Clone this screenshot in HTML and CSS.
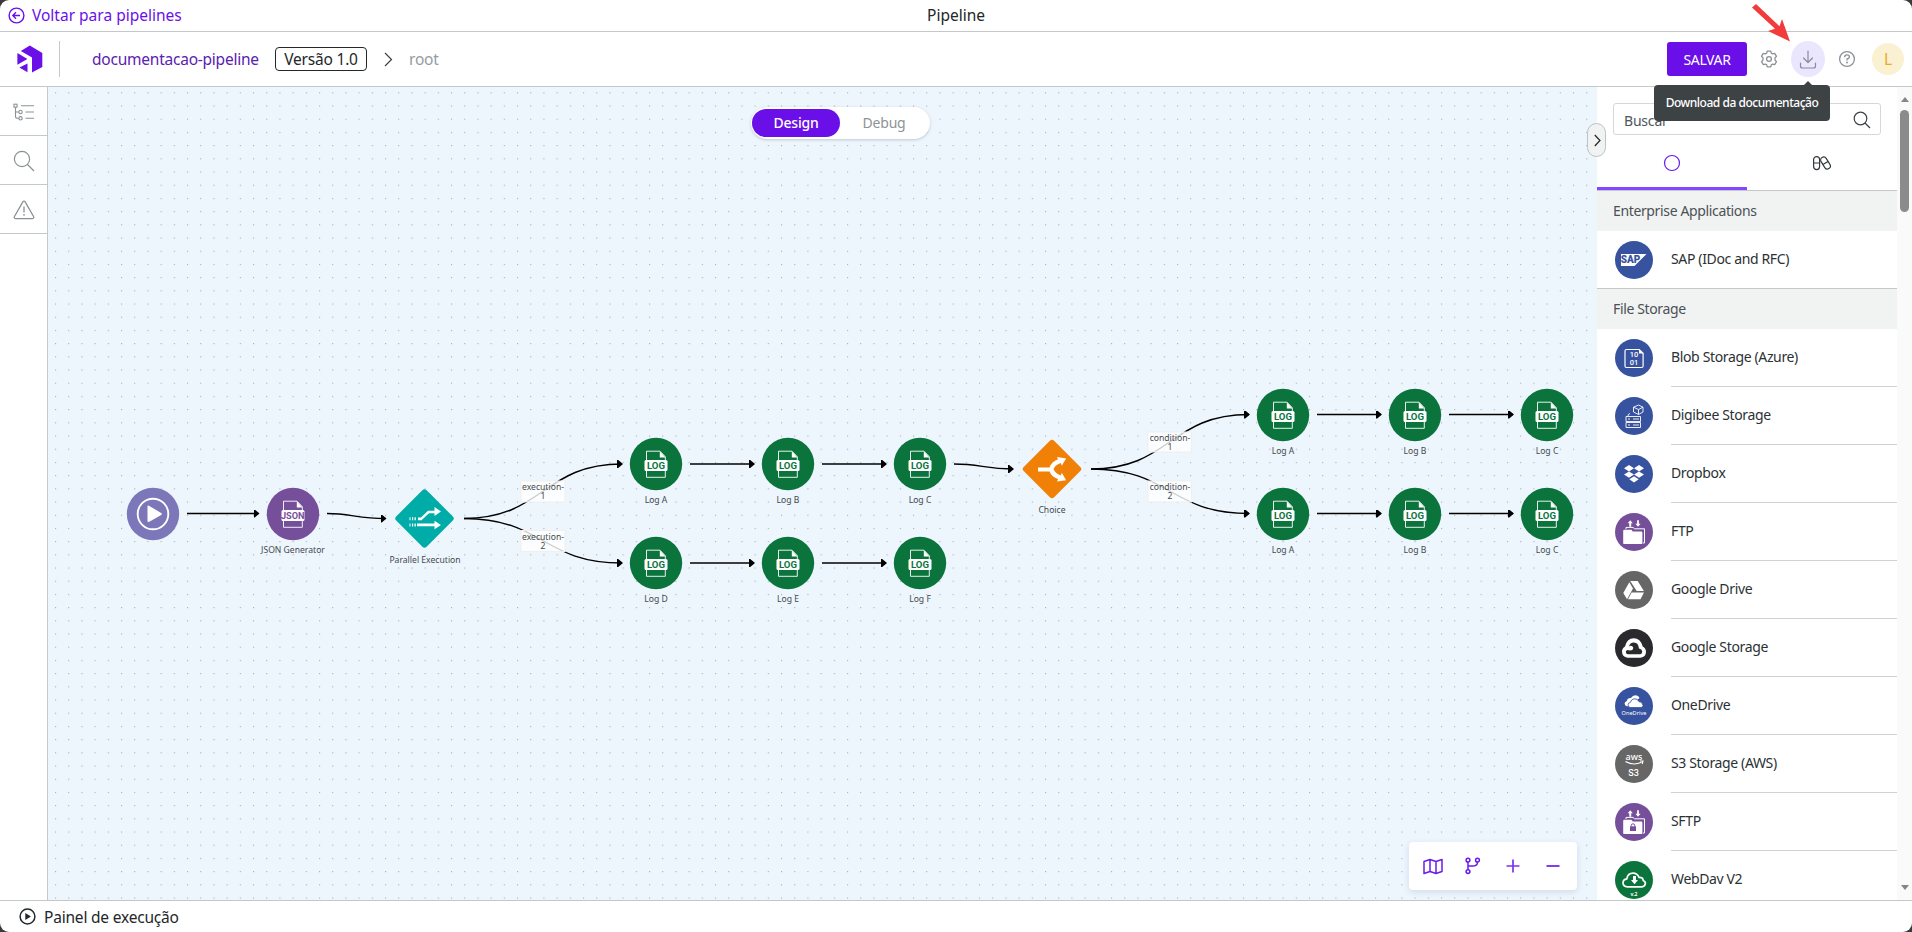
FILE: index.html
```html
<!DOCTYPE html>
<html lang="pt-BR">
<head>
<meta charset="utf-8">
<title>Pipeline</title>
<link rel="stylesheet" href="styles.css">
</head>
<body>
<svg width="0" height="0" class="defs">
  <defs>
    <symbol id="file" viewBox="-26 -26 52 52">
      <path d="M-9.5-4V-12.8H4L9.3-7.3V-4M-9.5 6V13.3H9.3V6" fill="none" stroke="#fff" stroke-width=".9"/>
      <path d="M3.8-12.8V-6.6H9.6z" fill="#fff"/>
      <rect x="-11.5" y="-4" width="23" height="11" rx="1.5" fill="#fff"/>
    </symbol>
    <symbol id="folder" viewBox="0 0 38 38">
      <path d="M15.3 7.2l2.5 3h-1.6v3.6h-1.9v-3.6h-1.6zM23 13.8l-2.6-3h1.700V7.200h1.800v3.600h1.700z" fill="#fff"/>
      <path d="M11 16v-1.600h7l1.500 1.400h10V30h-1.500" fill="none" stroke="#fff" stroke-width="1"/>
      <path d="M8.200 18q0-1.200 1.200-1.200h7l1.400 1.700h8.400q1.200 0 1.200 1.200v10.200q0 1.200-1.200 1.200H9.400q-1.200 0-1.200-1.200z" fill="#fff"/>
    </symbol>
  </defs>
</svg>
<div class="app">
  <header class="topbar">
    <a class="back"><svg width="17" height="17" viewBox="0 0 17 17" fill="none" stroke="#6a0fe8" stroke-width="1.4"><circle cx="8.5" cy="8.5" r="7.4"/><path d="M12 8.5H5M8 5.3L4.8 8.5 8 11.7"/></svg><span>Voltar para pipelines</span></a>
    <h1>Pipeline</h1>
  </header>
  <div class="subbar">
    <svg class="logo" width="26" height="29" viewBox="0 0 26 29"><path d="M12.800.6L25.300 8v14L15 27.600V12.400L3.800 5.900z" fill="#6a0fe8"/><path d="M.4 8.100V19.700L10.400 14z" fill="#6a0fe8"/><path d="M10.500 18.500V27.300L2.400 22.600z" fill="#6a0fe8"/></svg>
    <i class="divider"></i>
    <a class="project">documentacao-pipeline</a>
    <span class="version">Versão 1.0</span>
    <svg class="chev" width="9" height="15" viewBox="0 0 9 15" fill="none" stroke="#3a4042" stroke-width="1.2"><path d="M1 1l6.500 6.500L1 14"/></svg>
    <span class="crumb">root</span>
    <div class="actions">
      <button class="save">SALVAR</button>
      <svg class="gear" width="18" height="18" viewBox="0 0 18 18" fill="none" stroke="#8b9295" stroke-width="1.3" stroke-linejoin="round"><circle cx="9" cy="9" r="2.4"/><path d="M7.200 1.200h3.600l.5 2 1.300.7 2.100-.6 1.800 3-1.500 1.600v2.200l1.500 1.600-1.800 3-2.100-.6-1.300.7-.5 2H7.200l-.5-2-1.300-.7-2.100.6-1.800-3L3 10.100V7.900L1.500 6.300l1.800-3 2.100.6 1.300-.7z"/></svg>
      <span class="download"><svg width="18" height="19" viewBox="0 0 18 19" fill="none" stroke="#8b8a9d" stroke-width="1.2" stroke-linecap="round" stroke-linejoin="round"><path d="M9 1v11.500M4.500 8L9 12.500 13.500 8M1.500 13v3q0 2 2 2h11q2 0 2-2v-3"/></svg>
        <span class="tooltip">Download da documentação</span></span>
      <svg class="help" width="18" height="18" viewBox="0 0 18 18" fill="none" stroke="#8b9295" stroke-width="1.3"><circle cx="9" cy="9" r="7.4"/><path d="M6.600 7.200q0-2.400 2.400-2.400t2.400 2.100Q11.400 8.400 9 9v1.500"/><circle cx="9" cy="12.500" r=".4"/></svg>
      <span class="avatar">L</span>
    </div>
  </div>
  <main class="work">
    <nav class="rail">
      <div><svg width="22" height="18" viewBox="0 0 22 18" fill="none" stroke="#8b9295" stroke-width="1.1"><rect x="1" y="1.200" width="3" height="3"/><circle cx="7.500" cy="9" r="1.700"/><circle cx="7.500" cy="15.300" r="1.700"/><path d="M2.500 4.200v9q0 2.100 2.100 2.100h1.200M2.500 9h3.300M8 2.700h13M12.500 9H21M12.500 15.300H21"/></svg></div>
      <div><svg width="22" height="22" viewBox="0 0 22 22" fill="none" stroke="#8b9295" stroke-width="1.2"><circle cx="9" cy="9" r="7.600"/><path d="M14.500 14.500L21 21"/></svg></div>
      <div><svg width="22" height="20" viewBox="0 0 22 20" fill="none" stroke="#8b9295" stroke-width="1.3" stroke-linejoin="round"><path d="M9.700 2.100q1.300-1.900 2.600 0l8.400 14.600q.6 1.700-1.200 1.900H2.500q-1.800-.2-1.200-1.900z"/><path d="M11 6.500v6M11 14v1.800"/></svg></div>
    </nav>
    <section class="canvas">
      <svg class="flow" width="1549" height="813" viewBox="48 87 1549 813">
        <defs>
          <pattern id="dots" x="55" y="92.300" width="13.200" height="13.200" patternUnits="userSpaceOnUse"><rect width="1.100" height="1.100" fill="#a3adb5"/></pattern>
          <marker id="tip" viewBox="0 0 6 8" refX="5" refY="4" markerWidth="6" markerHeight="8" markerUnits="userSpaceOnUse" orient="0"><path d="M0 0H1.200L6 4 1.200 8H0z"/></marker>
        </defs>
        <rect x="48" y="87" width="1549" height="813" fill="url(#dots)"/>
        <g class="edges">
          <path d="M187 513.500H258.500"/>
          <path d="M327 513.500C350 513.500 358 518.500 385.500 518.500"/>
          <path d="M464 518.500C543 518.500 543 464 622 464"/>
          <path d="M464 518.500C543 518.500 543 563 622 563"/>
          <path d="M690 464H754"/><path d="M822 464H886"/>
          <path d="M690 563H754"/><path d="M822 563H886"/>
          <path d="M954 464C980 464 985 469 1013 469"/>
          <path d="M1091 469C1170 469 1170 414.500 1249 414.500"/>
          <path d="M1091 469C1170 469 1170 513.500 1249 513.500"/>
          <path d="M1317 414.500H1381"/><path d="M1449 414.500H1513"/>
          <path d="M1317 513.500H1381"/><path d="M1449 513.500H1513"/>
        </g>
        <g class="edge-labels">
          <rect x="521" y="481" width="44" height="21"/><rect x="521" y="530.500" width="44" height="21"/>
          <rect x="1148" y="432" width="43.500" height="20"/><rect x="1148" y="481" width="43.500" height="21"/>
          <text x="543" y="490">execution-</text><text x="543" y="499">1</text>
          <text x="543" y="540">execution-</text><text x="543" y="549">2</text>
          <text x="1170" y="441">condition-</text><text x="1170" y="450">1</text>
          <text x="1170" y="490">condition-</text><text x="1170" y="499">2</text>
        </g>
        <circle cx="153" cy="514" r="26.200" fill="#7c77b9"/>
        <circle cx="153" cy="514" r="15.300" fill="none" stroke="#fff" stroke-width="1.900"/>
        <path d="M147.500 506.500q0-1.500 1.400-.8l12.300 7.300q1.300 1 0 2l-12.300 6.900q-1.400.7-1.400-.8z" fill="#fff"/>
        <circle cx="293" cy="514" r="26.200" fill="#764f9a"/>
        <use href="#file" x="267" y="488" width="52" height="52"/>
        <text class="badge json" x="292.800" y="518.800">JSON</text>
        <rect x="403" y="497" width="43" height="43" rx="3" transform="rotate(45 424.500 518.500)" fill="#00aca7"/>
        <path d="M418 517.500h3l7-6.700h6.500V507l6.500 4.500-6.500 4.500v-2.800H429l-7.500 7h-3.500zM417 523.500h17.500v-2.700l6.500 4.200-6.500 4.200v-2.900H417zM412 517.200h1.200v3H412zM414.500 517.200h1.300v3h-1.300zM409.500 517.200h1v3h-1zM409.500 523.500h1v3h-1zM412 523.500h1.200v3H412zM414.500 523.500h1.300v3h-1.300z" fill="#fff"/>
        <rect x="1030.500" y="447.500" width="43" height="43" rx="3" transform="rotate(45 1052 469)" fill="#f18106"/>
        <path d="M1038 467.400h11.500q2-5.500 8.500-8.100l-.9-2.300 9 1.400-4.300 7.300-1-2.600q-5.800 2-7.300 6 1.500 4.500 7.300 6.300l1-2.700 4.300 7.500-9 1.200.9-2.400q-6.500-2.100-8.500-7.500H1038z" fill="#fff"/>
        <g id="logs"></g>
        <g class="labels">
          <text x="293" y="553">JSON Generator</text><text x="425" y="563">Parallel Execution</text><text x="1052" y="513">Choice</text>
        </g>
      </svg>
      <div class="mode"><b>Design</b><span>Debug</span></div>
      <div class="tools">
        <svg width="20" height="17" viewBox="0 0 20 17" fill="none" stroke="#6a1be8" stroke-width="1.5" stroke-linejoin="round"><path d="M1 3.500L7 1.500 13 3.500 19 1.500V13.500L13 15.500 7 13.500 1 15.500zM7 1.500v12M13 3.500v12"/></svg>
        <svg width="16" height="18" viewBox="0 0 16 18" fill="none" stroke="#6a1be8" stroke-width="1.500"><circle cx="3" cy="3.200" r="1.900"/><circle cx="12.500" cy="3.200" r="1.900"/><circle cx="3" cy="14.600" r="1.900"/><path d="M3 5v7.700M12.500 5q0 3.900-4 3.900H3"/></svg>
        <svg width="14" height="14" viewBox="0 0 14 14" stroke="#7a35ee" stroke-width="1.700"><path d="M.5 7h13M7 .5v13"/></svg>
        <svg width="14" height="14" viewBox="0 0 14 14" stroke="#7a35ee" stroke-width="1.900"><path d="M.5 7h13"/></svg>
      </div>
    </section>
    <aside class="panel">
      <div class="handle"><svg width="7" height="13" viewBox="0 0 7 13" fill="none" stroke="#222" stroke-width="1.200"><path d="M.8 1l5.200 5.500L.8 12"/></svg></div>
      <div class="list">
        <div class="search"><span>Buscar</span><svg width="18" height="18" viewBox="0 0 18 18" fill="none" stroke="#3c4245" stroke-width="1.200"><circle cx="7.500" cy="7.500" r="6.300"/><path d="M12 12l5 5"/></svg></div>
        <div class="tabs">
          <div class="on"><svg width="18" height="18" viewBox="0 0 18 18"><circle cx="9" cy="9" r="7.500" fill="none" stroke="#6a1be8" stroke-width="1.200"/></svg></div>
          <div><svg width="20" height="16" viewBox="0 0 20 16" fill="none" stroke="#333a3d" stroke-width="1.200"><rect x="1.600" y="1.600" width="6" height="13" rx="3"/><path d="M1.600 8h6"/><g transform="rotate(-32 13.500 8)"><rect x="10.500" y="1.500" width="6" height="13" rx="3"/><path d="M10.500 8h6"/></g></svg></div>
        </div>
        <h2>Enterprise Applications</h2>
        <div class="row last"><svg width="38" height="38" viewBox="0 0 38 38"><circle cx="19" cy="19" r="19" fill="#37529f"/><path d="M6 13h25.500L19.500 25H6z" fill="#fff"/><text class="sap" x="15.500" y="22.300">SAP</text></svg><span>SAP (IDoc and RFC)</span></div>
        <h2>File Storage</h2>
        <div class="row"><svg width="38" height="38" viewBox="0 0 38 38"><circle cx="19" cy="19" r="19" fill="#37529f"/><path d="M11.500 10.500h12.700l3.900 3.700V27q0 1.500-1.500 1.500H11.500Q10 28.500 10 27V12q0-1.500 1.500-1.500z" fill="none" stroke="#fff" stroke-width="1.200"/><path d="M24 10.500v4h4.200z" fill="#fff"/><text class="bits" x="19" y="18">10</text><text class="bits" x="19" y="25.500">01</text></svg><span>Blob Storage (Azure)</span></div>
        <div class="row"><svg width="38" height="38" viewBox="0 0 38 38" fill="none" stroke="#fff" stroke-width=".9"><circle cx="19" cy="19" r="19" fill="#37529f" stroke="none"/><path d="M11 19.500h14.500v5H11zM11 25.500h14.500v5H11zM13 19.500q-.5-2.500 2-3M23.500 8L28 10.200V15L23.500 17.500 18.500 15V10.200zM18.500 10.200l5 2.300L28 10.200M23.500 12.500v5M13 22h2M13 28h2M18 22h6M18 28h6"/></svg><span>Digibee Storage</span></div>
        <div class="row"><svg width="38" height="38" viewBox="0 0 38 38"><circle cx="19" cy="19" r="19" fill="#37529f"/><path d="M14 10l5 3.200-5 3.200-5-3.200zM24 10l5 3.200-5 3.200-5-3.200zM14 16.400l5 3.200-5 3.200-5-3.200zM24 16.400l5 3.200-5 3.200-5-3.200zM19 21.300l4.700 3-4.700 3.300-4.700-3.300z" fill="#fff"/></svg><span>Dropbox</span></div>
        <div class="row"><svg width="38" height="38" viewBox="0 0 38 38"><circle cx="19" cy="19" r="19" fill="#764f9a"/><use href="#folder"/></svg><span>FTP</span></div>
        <div class="row"><svg width="38" height="38" viewBox="0 0 38 38"><circle cx="19" cy="19" r="19" fill="#666"/><path d="M15.200 10h7.500l6.200 10h-7.200zM14.300 11.200l3.700 6.200-6 10.800-3.700-6.200zM16.600 21.400H29l-3.500 6.800H13z" fill="#fff"/></svg><span>Google Drive</span></div>
        <div class="row"><svg width="38" height="38" viewBox="0 0 38 38"><circle cx="19" cy="19" r="19" fill="#29292e"/><path d="M12.500 28.700Q7 28 7 22.600q0-3.300 3-5.100Q12 9.200 18.800 9.200q6.700 0 8.900 8.200 3.300 1.700 3.300 5.400 0 5.400-5.500 5.900z" fill="#fff"/><path d="M12.600 25.300q-1.800-.3-1.800-2.200 0-1.600 1.800-2 3.300 1 5.200-.6 1.200-2-.5-3.300-1.800-1-3.300.4.900-4 4.900-4 4.600.2 5 5.900 3.300 1 3.300 3.300 0 2.200-2 2.500z" fill="#29292e"/></svg><span>Google Storage</span></div>
        <div class="row"><svg width="38" height="38" viewBox="0 0 38 38"><circle cx="19" cy="19" r="19" fill="#37529f"/><path d="M14 19.300h-2q-2.500-.5-2.400-2.700.2-2 2-2.300 1-3.500 4.300-3.200 2.600-4 6.600-2.300 1.500.7 2 2.300" fill="#fff"/><path d="M15.500 20.500q-2.500-.2-2.500-2.600.2-2.300 2.300-2.400 1-3.300 3.700-3.700 3.500-.5 5 2.900 3.200 0 3.200 2 2 1.800-.6 3.800z" fill="#fff" stroke="#37529f" stroke-width=".8"/><text class="one" x="19" y="28">OneDrive</text></svg><span>OneDrive</span></div>
        <div class="row"><svg width="38" height="38" viewBox="0 0 38 38"><circle cx="19" cy="19" r="19" fill="#666"/><text class="aws" x="19" y="14.500">aws</text><path d="M10.500 16.500q8 4.600 16 .8M25 16h3l-.8 3" fill="none" stroke="#fff" stroke-width="1.100"/><text class="s3" x="18.500" y="31">S3</text></svg><span>S3 Storage (AWS)</span></div>
        <div class="row"><svg width="38" height="38" viewBox="0 0 38 38"><circle cx="19" cy="19" r="19" fill="#764f9a"/><use href="#folder"/><rect x="15" y="23.300" width="6" height="4.700" fill="#764f9a"/><path d="M16.200 23.500v-1q0-1.700 1.800-1.700t1.800 1.700v1" fill="none" stroke="#764f9a"/></svg><span>SFTP</span></div>
        <div class="row"><svg width="38" height="38" viewBox="0 0 38 38"><circle cx="19" cy="19" r="19" fill="#0b743c"/><path d="M12.500 25.800q-4.500-.3-4.500-4.100 0-3.200 3.800-3.900 1-5.700 6.200-5.700 4.300 0 6 4.200 4-.3 4.200 3.200 2.300.8 2.200 3.200-.5 3-3.500 3.100z" fill="none" stroke="#fff" stroke-width="1.700"/><path d="M18 15h3v4h2l-3.500 4.200-3.500-4.200h2z" fill="#fff"/><text class="v2" x="19" y="34.500">v.2</text></svg><span>WebDav V2</span></div>
      </div>
      <div class="scroll"><i class="up"></i><i class="thumb"></i><i class="down"></i></div>
    </aside>
  </main>
  <footer class="foot"><svg width="17" height="17" viewBox="0 0 17 17"><circle cx="8.500" cy="8.500" r="7.400" fill="none" stroke="#222729" stroke-width="1.500"/><path d="M6.300 4.900l5.600 3.600-5.600 3.600z" fill="#222729"/></svg><span>Painel de execução</span></footer>
  <svg class="pointer" width="40" height="40" viewBox="0 0 40 40"><path d="M4 1L27.500 23.200 30 16 38 38.500 16 28l7-2.200L0 4.500z" fill="#f23b3b"/></svg>
</div>
<script src="nodes.js"></script>
</body>
</html>
```
FILE: styles.css
```css
* { box-sizing: border-box; }
html { background: #3a3a3c; }
body { margin: 0; width: 1912px; height: 932px; overflow: hidden; font-family: "Noto Sans", sans-serif; color: #2b3134; }
svg { display: block; flex: none; }
.defs { position: absolute; }
.app { position: relative; width: 1912px; height: 932px; background: #fff; border-radius: 9px; overflow: hidden; display: flex; flex-direction: column; }
.topbar { height: 32px; border-bottom: 1px solid #c3c8ca; display: grid; grid-template-columns: 1fr auto 1fr; align-items: center; }
.back { display: flex; align-items: center; gap: 7px; padding-left: 8px; color: #6a0fe8; font-size: 15.500px; }
.back span, h1 { padding-bottom: 1px; }
h1 { margin: 0; font-size: 15.500px; font-weight: 400; color: #222729; }
.subbar { height: 55px; border-bottom: 1px solid #c3c8ca; display: flex; align-items: center; padding-left: 17px; }
.divider { width: 1px; height: 36px; background: #c3c8ca; margin: 0 32px 0 16px; }
.project { width: 167px; color: #5b21b0; font-size: 15.500px; letter-spacing: -.23px; white-space: nowrap; }
.version { margin-left: 16px; width: 92px; height: 24px; border: 1px solid #222729; border-radius: 4px; font-size: 15.500px; letter-spacing: -.2px; line-height: 23px; text-align: center; color: #222729; }
.chev { margin-left: 17px; }
.crumb { margin-left: 16px; color: #969c9f; font-size: 15.500px; letter-spacing: -.2px; padding-bottom: 1px; }
.actions { margin-left: auto; display: flex; align-items: center; padding-right: 8px; }
.save { width: 80px; height: 34px; border: 0; border-radius: 3px; background: #6a0fe8; color: #fff; font: 14px "Noto Sans", sans-serif; letter-spacing: -.35px; padding: 0; }
.gear { margin-left: 13px; }
.download { position: relative; margin-left: 13px; width: 34px; height: 36px; border-radius: 50%; background: #eae6fe; display: flex; align-items: center; justify-content: center; }
.tooltip { position: absolute; z-index: 5; top: 44px; left: -137px; width: 176px; height: 36px; border-radius: 4px; background: #3d4345; color: #fff; font-size: 12px; font-weight: 500; letter-spacing: -.47px; line-height: 35px; text-align: center; white-space: nowrap; }
.tooltip::before { content: ""; position: absolute; left: 150px; top: -4px; border: 4px solid transparent; border-top: 0; border-bottom-color: #3d4345; }
.help { margin-left: 13px; }
.avatar { margin-left: 16px; width: 32px; height: 32px; border-radius: 50%; background: #f9f1d2; color: #ecaa1e; font-size: 15.500px; line-height: 32px; text-align: center; }
.work { height: 813px; display: flex; }
.rail { width: 48px; border-right: 1px solid #c3c8ca; }
.rail div { height: 49px; border-bottom: 1px solid #c3c8ca; display: flex; align-items: center; justify-content: center; padding: 2px 0 0 1px; }
.canvas { position: relative; width: 1549px; background: #edf5fd; }
.edges path { fill: none; stroke: #000; stroke-width: 1.400; marker-end: url(#tip); }
.edge-labels rect { fill: #fff; fill-opacity: .8; stroke: #efefef; stroke-width: 1; }
.flow text { text-anchor: middle; font-size: 8.600px; fill: #444a4d; }
.flow .badge { font: 700 9.600px Roboto, sans-serif; fill: #0b743c; }
.flow .json { fill: #764f9a; font-size: 9.200px; }
.mode { position: absolute; left: 703px; top: 20px; width: 179px; height: 32px; border-radius: 16px; background: #fff; box-shadow: 0 1px 3px rgba(60,70,80,.25); display: flex; align-items: center; padding: 2px; font-size: 14px; letter-spacing: -.2px; }
.mode b { width: 88px; height: 28px; border-radius: 14px; background: #6a0fe8; color: #fff; font-weight: 500; text-align: center; line-height: 28px; margin-left: -1px; }
.mode span { flex: 1; text-align: center; color: #8d9396; line-height: 28px; }
.tools { position: absolute; left: 1361px; top: 755px; width: 168px; height: 48px; border-radius: 4px; background: #fff; box-shadow: 0 2px 6px rgba(60,80,110,.15); display: grid; grid-template-columns: repeat(4, 40px); justify-content: center; place-items: center; }
.panel { position: relative; width: 315px; display: flex; background: #fff; }
.handle { position: absolute; left: -10px; top: 36px; width: 19px; height: 34px; border: 1px solid #bcc3c3; border-radius: 10px; background: #f1f3f3; display: flex; align-items: center; justify-content: center; padding-left: 1px; }
.list { width: 300px; height: 813px; overflow: hidden; }
.search { margin: 16px 16px 0; height: 32px; border: 1px solid #d5d8d9; border-radius: 3px; display: flex; align-items: center; justify-content: space-between; padding: 2px 9px 0 10px; font-size: 14px; letter-spacing: -.2px; color: #50565a; }
.tabs { display: flex; height: 56px; border-bottom: 1px solid #c3c8ca; }
.tabs div { width: 150px; height: 56px; display: flex; justify-content: center; align-items: center; padding-bottom: 1px; }
.tabs .on { height: 55px; border-bottom: 3px solid #8447ff; padding: 3px 0 0; }
h2 { margin: 0; height: 40px; padding-left: 16px; background: #f1f3f3; color: #4b5154; font-size: 14px; font-weight: 400; letter-spacing: -.36px; line-height: 40px; }
.row { height: 58px; display: grid; grid-template-columns: 38px 1fr; column-gap: 18px; padding-left: 18px; align-items: center; font-size: 14px; }
.row span { height: 58px; line-height: 56px; letter-spacing: -.36px; border-bottom: 1px solid #cfd3d4; }
.row.last { border-bottom: 1px solid #c3c8ca; }
.row.last span { border: 0; }
.row text { fill: #fff; text-anchor: middle; }
.row .sap { fill: #37529f; font: 900 10px Roboto, sans-serif; }
.row .bits { font: 500 7.500px Roboto, sans-serif; }
.row .one { font-size: 5.600px; }
.row .aws { font-size: 9px; font-weight: 500; }
.row .s3 { font: 500 9px Roboto, sans-serif; }
.row .v2 { font-size: 5px; font-weight: 700; }
.scroll { width: 15px; background: #fafafa; display: flex; flex-direction: column; align-items: center; }
.up, .down { border: 4.500px solid transparent; }
.up { margin-top: 10px; border-top: 0; border-bottom: 5px solid #858585; }
.thumb { width: 9px; height: 102px; margin-top: 8px; border-radius: 5px; background: #8b8b8b; }
.down { margin: auto 0 10px; border-bottom: 0; border-top: 5px solid #858585; }
.foot { flex: 1; border-top: 1px solid #c3c8ca; display: flex; align-items: center; gap: 8px; padding-left: 19px; font-size: 15.500px; letter-spacing: -.2px; color: #222729; }
.pointer { position: absolute; left: 1752px; top: 3px; }
```
FILE: nodes.js
```js
const logs = [
  ["Log A", 656, 464], ["Log B", 788, 464], ["Log C", 920, 464],
  ["Log D", 656, 563], ["Log E", 788, 563], ["Log F", 920, 563],
  ["Log A", 1283, 415], ["Log B", 1415, 415], ["Log C", 1547, 415],
  ["Log A", 1283, 514], ["Log B", 1415, 514], ["Log C", 1547, 514]
];
document.getElementById("logs").innerHTML = logs.map(([name, x, y]) =>
  `<circle cx="${x}" cy="${y}" r="26.2" fill="#0b743c"/>
   <use href="#file" x="${x - 26}" y="${y - 26}" width="52" height="52"/>
   <text class="badge" x="${x}" y="${y + 5}">LOG</text>
   <text x="${x}" y="${y + 39}">${name}</text>`).join("");
```
